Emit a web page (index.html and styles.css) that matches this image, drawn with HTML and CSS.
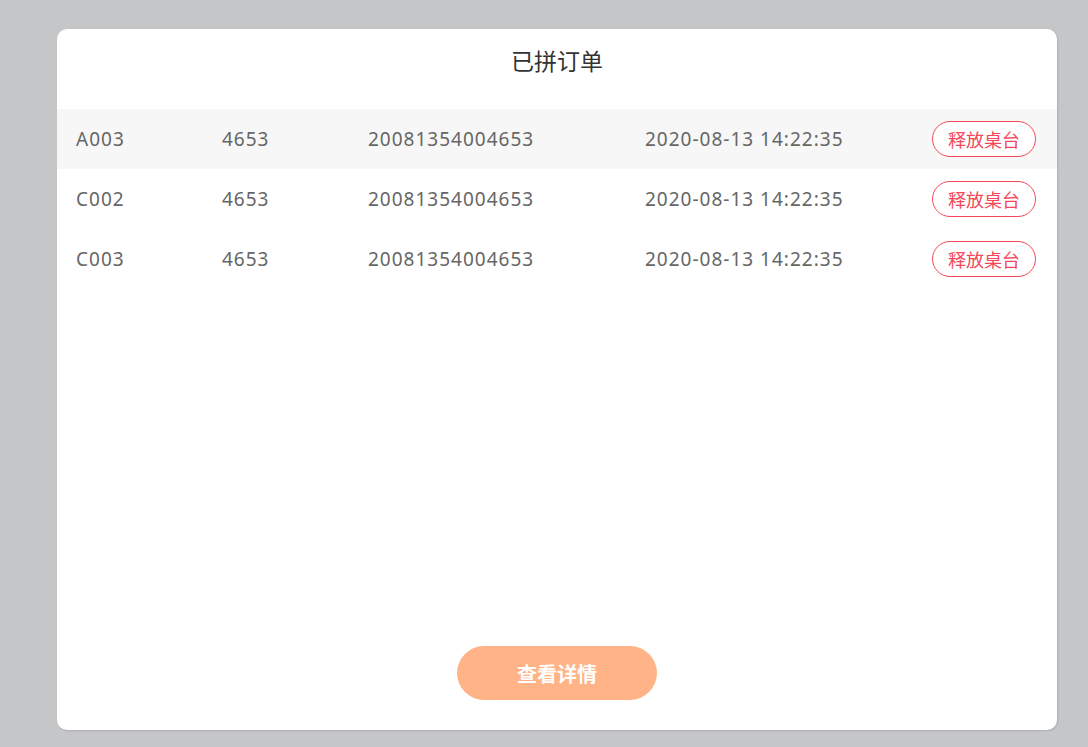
FILE: index.html
```html
<!DOCTYPE html>
<html lang="zh-CN">
<head>
    <meta charset="UTF-8">
    <title>已拼订单</title>
    <link rel="stylesheet" href="styles.css">
</head>
<body>
    <div class="card">
        <h2 class="title">已拼订单</h2>
        <div class="list">
            <div class="row active">
                <span class="col-table">A003</span>
                <span class="col-code">4653</span>
                <span class="col-no">20081354004653</span>
                <span class="col-time">2020-08-13 14:22:35</span>
                <button class="release">释放桌台</button>
            </div>
            <div class="row">
                <span class="col-table">C002</span>
                <span class="col-code">4653</span>
                <span class="col-no">20081354004653</span>
                <span class="col-time">2020-08-13 14:22:35</span>
                <button class="release">释放桌台</button>
            </div>
            <div class="row">
                <span class="col-table">C003</span>
                <span class="col-code">4653</span>
                <span class="col-no">20081354004653</span>
                <span class="col-time">2020-08-13 14:22:35</span>
                <button class="release">释放桌台</button>
            </div>
        </div>
        <div class="footer">
            <button class="detail">查看详情</button>
        </div>
    </div>
</body>
</html>
```

FILE: styles.css
```css
body {
    margin: 0;
    height: 747px;
    background-color: #c5c6c8;
    font-family: "Noto Sans", "Noto Sans CJK SC", sans-serif;
    overflow: hidden;
}
.card {
    margin: 29px 0 0 57px;
    width: 1000px;
    height: 701px;
    background-color: #fff;
    border-radius: 10px;
    box-shadow: 1px 1px 2px rgba(0, 0, 0, 0.12);
    display: flex;
    flex-direction: column;
}
.title {
    margin: 0;
    height: 80px;
    line-height: 62px;
    text-align: center;
    font-size: 23px;
    font-weight: normal;
    color: #333;
    font-family: "Noto Sans CJK SC", sans-serif;
}
.list {
    flex-grow: 1;
}
.row {
    display: flex;
    align-items: center;
    height: 60px;
    padding: 0 21px 0 19px;
    font-size: 19px;
    letter-spacing: 1px;
    color: #666;
}
.row.active {
    background-color: #f7f7f7;
}
.col-table, .col-code {
    width: 146px;
}
.col-no {
    width: 277px;
}
.col-time {
    flex-grow: 1;
}
.release {
    width: 104px;
    height: 36px;
    border: 1px solid #f5475a;
    border-radius: 18px;
    background: #fff;
    color: #f5475a;
    font-size: 18px;
    letter-spacing: 0;
    font-family: "Noto Sans CJK SC", sans-serif;
    padding: 0;
}
.footer {
    display: flex;
    justify-content: center;
    padding-bottom: 30px;
}
.detail {
    width: 200px;
    height: 54px;
    border: none;
    border-radius: 27px;
    background-color: #ffb386;
    color: #fff;
    font-size: 20px;
    font-weight: bold;
    font-family: "Noto Sans CJK SC", sans-serif;
}
```
